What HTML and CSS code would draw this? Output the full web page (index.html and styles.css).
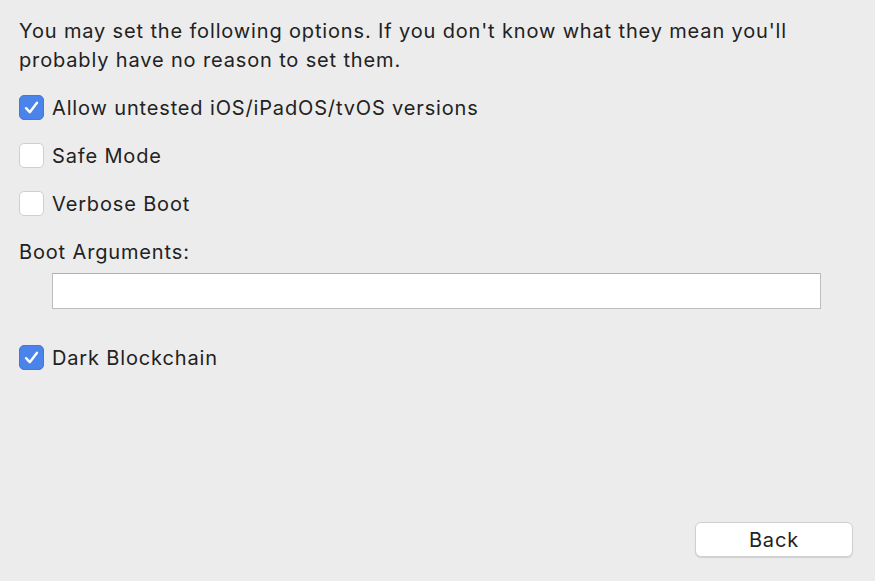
FILE: index.html
```html
<!DOCTYPE html>
<html>
<head>
<meta charset="utf-8">
<link rel="stylesheet" href="styles.css">
</head>
<body>
<div class="pane">
  <p class="intro">You may set the following options. If you don't know what they mean you'll<br>probably have no reason to set them.</p>
  <div class="options">
    <label class="row"><span class="box checked"><svg viewBox="0 0 25 25" width="25" height="25"><path d="M7 13.2 L10.8 17.2 L18 7.8" fill="none" stroke="#fff" stroke-width="2.4" stroke-linecap="round" stroke-linejoin="round"/></svg></span><span class="text">Allow untested iOS/iPadOS/tvOS versions</span></label>
    <label class="row"><span class="box"></span><span class="text">Safe Mode</span></label>
    <label class="row"><span class="box"></span><span class="text">Verbose Boot</span></label>
    <div class="row field-label"><span class="text">Boot Arguments:</span></div>
    <div class="input"></div>
    <label class="row last"><span class="box checked"><svg viewBox="0 0 25 25" width="25" height="25"><path d="M7 13.2 L10.8 17.2 L18 7.8" fill="none" stroke="#fff" stroke-width="2.4" stroke-linecap="round" stroke-linejoin="round"/></svg></span><span class="text">Dark Blockchain</span></label>
  </div>
  <div class="footer"><button class="btn">Back</button></div>
</div>
</body>
</html>
```
FILE: styles.css
```css
html, body {
  margin: 0;
  padding: 0;
  background: #ececec;
}
.pane {
  box-sizing: border-box;
  height: 581px;
  padding: 17px 22px 24px 19px;
  display: flex;
  flex-direction: column;
  font-family: Inter, "Liberation Sans", sans-serif;
  font-size: 20px;
  letter-spacing: 0.85px;
  color: #222;
}
.intro {
  margin: 0;
  line-height: 29px;
}
.options {
  margin-top: 20px;
  display: flex;
  flex-direction: column;
}
.row {
  display: flex;
  align-items: center;
  height: 25px;
  margin-bottom: 23px;
}
.row .text {
  line-height: 25px;
  padding-top: 1px;
}
.box {
  box-sizing: border-box;
  width: 25px;
  height: 25px;
  border-radius: 5px;
  background: #fff;
  border: 1px solid #cfcfcf;
  margin-right: 8px;
  flex: none;
  display: flex;
}
.box.checked {
  background: #4a84ea;
  border-color: #3f78e0;
}
.box.checked svg {
  margin: -1px;
}
.field-label {
  margin-bottom: 9px;
}
.input {
  margin-left: 33px;
  width: 769px;
  height: 36px;
  box-sizing: border-box;
  background: #fff;
  border: 1px solid #bdbdbd;
  border-top-color: #b0b0b0;
  margin-bottom: 36px;
}
.row.last {
  margin-bottom: 0;
}
.footer {
  margin-top: auto;
  display: flex;
  justify-content: flex-end;
}
.btn {
  width: 158px;
  height: 35px;
  box-sizing: border-box;
  background: #fff;
  border: 1px solid #d0d0d0;
  border-radius: 6px;
  box-shadow: 0 1px 1px rgba(0,0,0,0.12);
  font-family: Inter, "Liberation Sans", sans-serif;
  font-size: 20px;
  letter-spacing: 0.85px;
  color: #222;
  padding: 0;
}
```
